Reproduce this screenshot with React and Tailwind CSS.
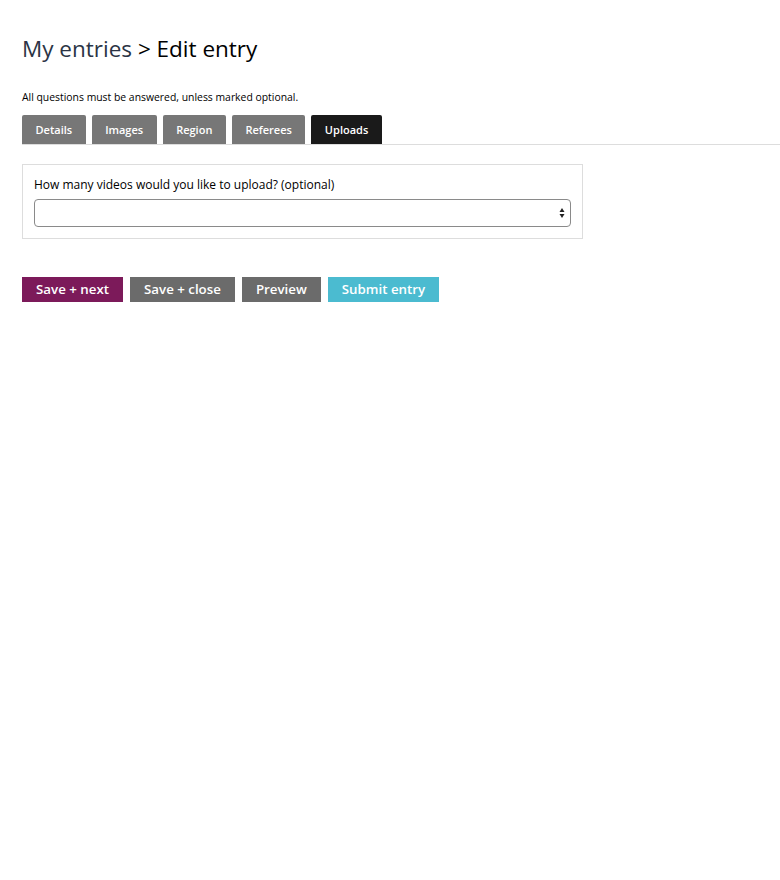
export default function App() {
  const tabs = ['Details', 'Images', 'Region', 'Referees', 'Uploads'];
  const btn = "h-[25px] px-[14px] text-[13.3px] font-semibold text-white leading-[25px]";

  return (
    <div className="min-h-[880px] bg-white font-['Open_Sans',sans-serif] text-black">
      <div className="pl-[22px] pt-[34px]">
        <h1 className="text-[22.5px] leading-[30px] font-normal">
          <a className="text-[#2b3445]">My entries</a> &gt; Edit entry
        </h1>
        <p className="mt-[26px] text-[10.4px] leading-[14px]">All questions must be answered, unless marked optional.</p>
      </div>

      <ul className="ml-[22px] mt-[4px] flex gap-[6px] border-b border-[#dddddd] pt-[7px]">
        {tabs.map(t => (
          <li key={t}
            className={`h-[29px] px-[13.5px] rounded-t-[2px] text-[11px] font-semibold leading-[29px] text-white ${t === 'Uploads' ? 'bg-[#1a1a1a]' : 'bg-[#777777]'}`}>
            {t}
          </li>
        ))}
      </ul>

      <div className="ml-[22px] mt-[19px] w-[561px] border border-[#dddddd] px-[11px] pt-[11px] pb-[11px]">
        <label className="block text-[12px] leading-[17px]">How many videos would you like to upload? (optional)</label>
        <div className="relative mt-[6px]">
          <select className="block h-[28px] w-full appearance-none rounded-[4px] border border-[#8a8a8a] bg-white px-2 text-[12px]">
            <option></option>
          </select>
          <svg className="pointer-events-none absolute right-[6px] top-[8px]" width="6" height="12" viewBox="0 0 6 12">
            <path d="M3 1 L5.5 5 H0.5 Z" fill="#222" />
            <path d="M3 11 L5.5 7 H0.5 Z" fill="#222" />
          </svg>
        </div>
      </div>

      <div className="ml-[22px] mt-[38px] flex gap-[7px]">
        <button className={`${btn} bg-[#7c1a5a]`}>Save + next</button>
        <button className={`${btn} bg-[#6b6b6b]`}>Save + close</button>
        <button className={`${btn} bg-[#6b6b6b]`}>Preview</button>
        <button className={`${btn} bg-[#4bbbd0]`}>Submit entry</button>
      </div>
    </div>
  );
}
